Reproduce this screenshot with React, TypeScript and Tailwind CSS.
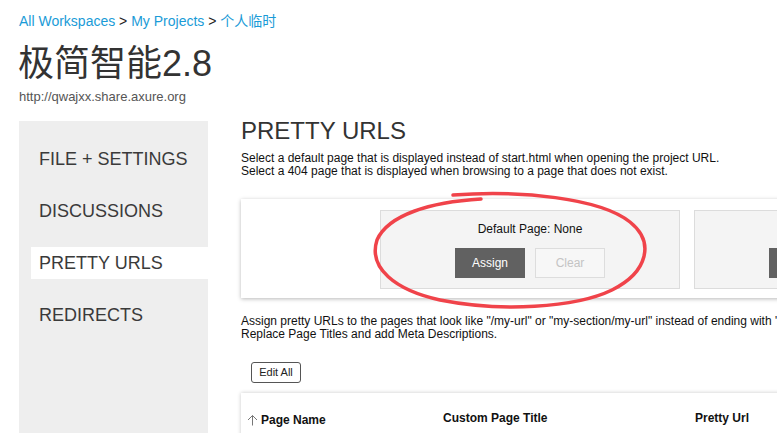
import type { ReactNode } from "react";

const SideItem = ({ children, active }: { children: ReactNode; active?: boolean }) => (
  <div
    className={
      "ml-[12px] h-[32px] pl-[8px] flex items-center text-[18px] text-[#3a3a3a] " +
      (active ? "bg-white" : "")
    }>
    {children}
  </div>
);

const PagePanel = ({ label }: { label: string }) => (
  <div className="w-[300px] h-[79px] shrink-0 border border-[#dcdcdc] bg-[#f4f4f4] flex flex-col items-center pt-[11px]">
    <div className="text-[12px] leading-[14px] text-[#111] whitespace-nowrap">{label}</div>
    <div className="mt-[12px] flex gap-[10px]">
      <button className="w-[70px] h-[30px] bg-[#616161] text-white text-[12px]">Assign</button>
      <button className="w-[70px] h-[30px] border border-[#dddddd] bg-[#f7f7f7] text-[#c4c4c4] text-[12px]">
        Clear
      </button>
    </div>
  </div>
);

export default function App() {
  return (
    <div
      className="relative w-[777px] h-[433px] overflow-hidden bg-white"
      style={{ fontFamily: '"Liberation Sans", "Noto Sans CJK SC", sans-serif' }}>
      <div className="pl-[19px] pt-[13px] text-[14px] leading-[16px] text-[#222]">
        <span className="text-[#1a9bd7]">All Workspaces</span> &gt;{" "}
        <span className="text-[#1a9bd7]">My Projects</span> &gt; <span className="text-[#1a9bd7]">个人临时</span>
      </div>
      <div className="pl-[18px] mt-[15px] text-[36px] leading-[40px] text-[#333]">极简智能2.8</div>
      <div className="pl-[19px] mt-[5px] text-[13px] leading-[16px] text-[#555]">http://qwajxx.share.axure.org</div>

      <div className="flex mt-[16px]">
        <div className="w-[189px] ml-[19px] h-[320px] shrink-0 bg-[#eeeeee] pt-[22px] flex flex-col gap-[20px]">
          <SideItem>FILE + SETTINGS</SideItem>
          <SideItem>DISCUSSIONS</SideItem>
          <SideItem active>PRETTY URLS</SideItem>
          <SideItem>REDIRECTS</SideItem>
        </div>

        <div className="ml-[33px] w-[890px] shrink-0 flex flex-col">
          <div className="text-[24px] leading-[20px] text-[#333]">PRETTY URLS</div>
          <div className="mt-[11px] text-[12px] leading-[13px] text-[#111] whitespace-nowrap">
            <div>Select a default page that is displayed instead of start.html when opening the project URL.</div>
            <div>Select a 404 page that is displayed when browsing to a page that does not exist.</div>
          </div>

          <div className="mt-[21px] h-[99px] bg-white shadow-[0_1px_4px_rgba(0,0,0,0.28)] flex gap-[14px] pl-[139px] pt-[11px]">
            <PagePanel label="Default Page: None" />
            <PagePanel label="404 Page: None" />
          </div>

          <div className="mt-[17px] text-[12px] leading-[13px] text-[#111] whitespace-nowrap">
            <div>
              Assign pretty URLs to the pages that look like "/my-url" or "my-section/my-url" instead of ending with ".html".
            </div>
            <div>Replace Page Titles and add Meta Descriptions.</div>
          </div>

          <div className="mt-[18px] ml-[10px]">
            <button className="w-[50px] h-[21px] rounded-[3px] border border-[#555] text-[11px] text-[#222] bg-white">
              Edit All
            </button>
          </div>

          <div className="mt-[10px] h-[80px] bg-white shadow-[0_0_4px_rgba(0,0,0,0.22)] pt-[18px] grid grid-cols-[202px_252px_1fr] items-start text-[12px] leading-[14px] font-bold text-[#111]">
            <div className="pl-[6px] pt-[2px] flex items-center gap-[3px]">
              <svg width="11" height="12" viewBox="0 0 11 12" fill="none" stroke="#777" strokeWidth="1">
                <path d="M5.5 11.5V1.5M1 6l4.5-4.5L10 6" />
              </svg>
              <span className="text-[#111]">Page Name</span>
            </div>
            <div>Custom Page Title</div>
            <div>Pretty Url</div>
          </div>
        </div>
      </div>

      <svg
        className="absolute inset-0 pointer-events-none"
        width="777"
        height="433"
        viewBox="0 0 777 433"
        fill="none">
        <path
          d="M453 195 C520 190, 600 198, 630 222 C655 242, 648 272, 612 290 C575 308, 500 312, 440 300 C395 290, 368 268, 377 240 C388 215, 430 202, 481 199"
          stroke="#f0434a"
          strokeWidth="3.5"
          strokeLinecap="round"
        />
      </svg>
    </div>
  );
}
